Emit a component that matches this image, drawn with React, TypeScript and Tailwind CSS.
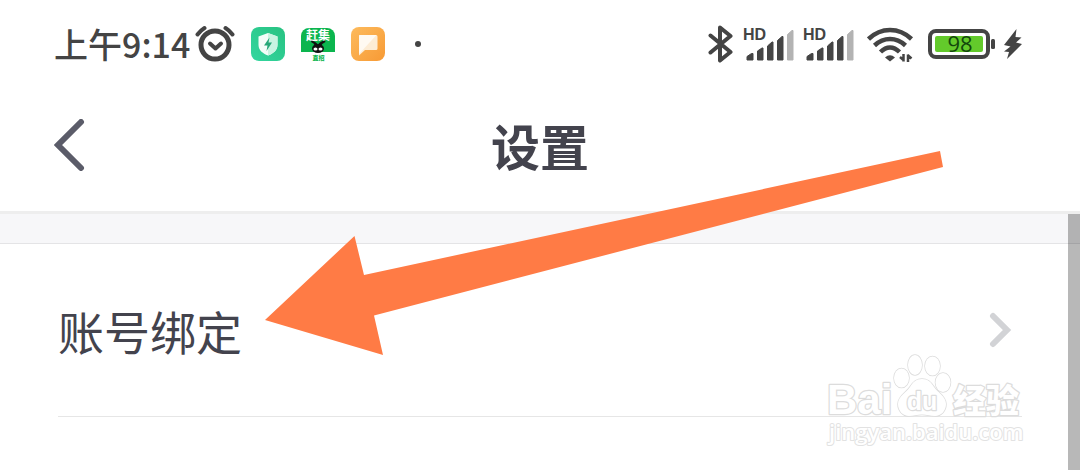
import type { ReactNode } from 'react'

function AlarmIcon() {
  return (
    <svg viewBox="0 0 40 40" className="size-10" fill="none" stroke="#444" strokeLinecap="round" aria-hidden="true">
      <circle cx="20" cy="21" r="14" strokeWidth="5" />
      <path d="M2.500 10.500Q5.500 6.500 9.500 4M30.500 4Q34.500 6.500 37.500 10.500" strokeWidth="4" />
      <path d="M15 19.500l5.500 5 5.500-5" strokeWidth="4" strokeLinejoin="round" />
    </svg>
  )
}

function ShieldAppIcon() {
  return (
    <svg viewBox="0 0 34 34" className="size-[34px]" aria-hidden="true">
      <defs>
        <linearGradient id="shield-bg" x1="0" y1="1" x2="1" y2="0">
          <stop offset="0" stopColor="#34d6a0" />
          <stop offset="1" stopColor="#27c281" />
        </linearGradient>
      </defs>
      <rect width="34" height="34" rx="8" fill="url(#shield-bg)" />
      <path d="M17 6l9.500 3.500V18c0 5-4 8.500-9.500 10.500C11.500 26.500 7.500 23 7.500 18V9.500z" fill="#f3fdf9" />
      <path d="M17 6l9.500 3.500V18c0 5-4 8.500-9.500 10.500z" fill="#c9f4e2" />
      <path d="M18.500 10.500L13 18.500h3.500L15.500 24l5.500-8.500h-3.500z" fill="#25a878" />
    </svg>
  )
}

function JobsAppIcon() {
  return (
    <svg viewBox="0 0 34 34" className="size-[34px] overflow-visible" role="img" aria-label="赶集直招">
      <path d="M0 25V9a8 8 0 0 1 8-8h18a8 8 0 0 1 8 8v16z" fill="#0bb54e" />
      <text x="17" y="13" textAnchor="middle" fontSize="12" fontWeight="700" fill="#fff" fontFamily="'Noto Sans CJK SC', sans-serif">
        赶集
      </text>
      <path d="M11 25.500h12l2 2.500H9z" fill="#fff" />
      <path d="M10.500 13.500q5 1 6.500 4.500 1.500-4 7-4.500l.5 1.500q-3.500 1.500-4.500 4h-6q-1-3-4-4z" fill="#111" />
      <ellipse cx="17" cy="21.500" rx="6" ry="4.500" fill="#111" />
      <ellipse cx="14.500" cy="22" rx="2" ry="1.500" fill="#fff" />
      <ellipse cx="19.500" cy="22" rx="2" ry="1.500" fill="#fff" />
      <text x="17.500" y="33" textAnchor="middle" fontSize="6" fontWeight="900" fill="#0bb54e" fontFamily="'Noto Sans CJK SC', sans-serif">
        直招
      </text>
    </svg>
  )
}

function NoteAppIcon() {
  return (
    <svg viewBox="0 0 34 34" className="size-[34px]" aria-hidden="true">
      <defs>
        <linearGradient id="note-bg" x1="0" y1="0" x2="1" y2="1">
          <stop offset="0" stopColor="#fdbb5d" />
          <stop offset="1" stopColor="#f79a35" />
        </linearGradient>
      </defs>
      <rect width="34" height="34" rx="8" fill="url(#note-bg)" />
      <path d="M9 8h16a1.500 1.500 0 0 1 1.500 1.500v12A1.500 1.500 0 0 1 25 23H14l-6 5.500V9A1 1 0 0 1 9 8z" fill="#fdecd4" />
      <path d="M9 8h16.500L8 27V9A1 1 0 0 1 9 8z" fill="#fffaf2" />
    </svg>
  )
}

function BluetoothIcon() {
  return (
    <svg viewBox="0 0 26 40" className="h-10 w-[26px]" fill="none" stroke="#444" strokeWidth="4" strokeLinecap="round" strokeLinejoin="round" aria-hidden="true">
      <path d="M2.500 11.500L22.500 28 12 36.500V3.500L22.500 12 2.500 28.500" />
    </svg>
  )
}

function SignalIcon() {
  return (
    <svg viewBox="0 0 50 36" className="h-9 w-[50px] overflow-visible" fill="#444" role="img" aria-label="HD">
      <text x="-1" y="14" fontSize="16" fontWeight="700" fontFamily="'Liberation Sans', sans-serif">
        HD
      </text>
      <g strokeLinejoin="round" strokeWidth="1">
        <path d="M3 30.500l4.500-3H9V34H3z" stroke="#444" />
        <path d="M13.500 25l4.500-3h1V34h-5.500z" stroke="#444" />
        <path d="M23.500 20l4.500-4h1V34h-5.500z" stroke="#444" />
        <path d="M33.500 14.500l4.500-4h1V34h-5.500z" stroke="#444" />
        <path d="M43.500 8.500l4.500-4h1V34h-5.500z" fill="#b3b3b3" stroke="#b3b3b3" />
      </g>
    </svg>
  )
}

function WifiIcon() {
  return (
    <svg viewBox="0 0 48 36" className="mx-[3px] h-9 w-12" fill="none" stroke="#444" strokeWidth="4.500" aria-hidden="true">
      <path d="M1.500 13Q11 4 23 4T44.500 13" />
      <path d="M7.500 19.500Q14.500 13 23 13T38.500 19.500" />
      <path d="M13.500 26Q18 21.500 23 21.500T32.500 26" />
      <path d="M18 31.500Q23 27 28 31.500L23 35.500z" fill="#444" stroke="none" />
      <path d="M36.500 28v7.500M37 34.500l-4-3.500M41 36v-7.500M40.500 29l4 3.500" strokeWidth="2.500" />
    </svg>
  )
}

function BatteryIcon() {
  return (
    <svg viewBox="0 0 66 32" className="h-8 w-[66px] overflow-visible" role="img" aria-label="98%">
      <rect x="2" y="3" width="58" height="26" rx="6" fill="#fff" stroke="#444" strokeWidth="4" />
      <rect x="7" y="8" width="48" height="16" rx="2" fill="#63ca2b" />
      <rect x="63" y="11" width="4" height="10" rx="1.500" fill="#444" />
      <text x="32" y="24" textAnchor="middle" fontSize="22" fontWeight="500" fill="#12470c" fontFamily="'Open Sans', sans-serif">
        98
      </text>
    </svg>
  )
}

function BoltIcon() {
  return (
    <svg viewBox="0 0 18 32" className="h-8 w-[18px]" fill="#444" aria-hidden="true">
      <path d="M12.500 1L0 17l6.500 1.500L0 23.500l5 .5L3 31 18 16l-6-1.500L17.500 9.500l-6-.5z" />
    </svg>
  )
}

function StatusBar() {
  return (
    <div className="flex h-22 items-center justify-between px-[54px] pr-[58px]">
      <div className="flex items-center gap-4">
        <div className="flex items-center gap-[5px]">
          <time className="text-[34px] leading-10 font-medium text-[#444]">上午9:14</time>
          <AlarmIcon />
        </div>
        <ShieldAppIcon />
        <JobsAppIcon />
        <NoteAppIcon />
        <span className="ml-3.5 size-1.5 rounded-full bg-[#444]" />
      </div>
      <div className="flex items-center gap-2.5">
        <BluetoothIcon />
        <SignalIcon />
        <SignalIcon />
        <WifiIcon />
        <BatteryIcon />
        <BoltIcon />
      </div>
    </div>
  )
}

function Header({ title }: { title: string }) {
  return (
    <header className="grid h-[126px] grid-cols-[1fr_auto_1fr] items-center border-b-3 border-[#eee] px-[54px] pb-2.5">
      <button type="button" aria-label="返回" className="justify-self-start">
        <svg viewBox="0 0 32 52" className="h-[52px] w-8" fill="none" stroke="#5b5c69" strokeWidth="6" strokeLinecap="round" strokeLinejoin="miter">
          <path d="M27 3L4 26l23 23" />
        </svg>
      </button>
      <h1 className="text-[49px] leading-14 font-bold text-[#43434d]">{title}</h1>
    </header>
  )
}

function SettingRow({ children }: { children: ReactNode }) {
  return (
    <li className="border-b border-[#e6e6e6]">
      <a href="#binding" className="flex h-43 items-center justify-between pr-2.5">
        <span className="text-[46px] leading-14 text-[#43434d]">{children}</span>
        <svg viewBox="0 0 24 36" className="h-9 w-6" fill="none" stroke="#d2d3d6" strokeWidth="6" strokeLinecap="round" aria-hidden="true">
          <path d="M5 4l14 14L5 32" />
        </svg>
      </a>
    </li>
  )
}

// Points from the tail at the top right down to the row label
function PointerArrow() {
  return (
    <svg viewBox="0 0 678 204" className="pointer-events-none absolute left-[265px] top-[151px] w-[678px]" aria-hidden="true">
      <path d="M0 169L89.500 85 99 124 675 0l3 16L109 164.500l9 39.500z" fill="#ff7b45" />
    </svg>
  )
}

function Watermark() {
  return (
    <svg
      viewBox="0 0 200 96"
      className="pointer-events-none absolute right-14 bottom-5 w-[200px]"
      fill="#fff"
      stroke="#dcdcdc"
      strokeWidth="2.500"
      strokeLinejoin="round"
      paintOrder="stroke"
      role="img"
      aria-label="Baidu 经验"
    >
      <text x="3" y="60" fontSize="42" fontWeight="700" fontFamily="'Liberation Sans', sans-serif">
        Bai
      </text>
      <g strokeWidth="1.500">
        <ellipse cx="77.500" cy="24" rx="7.500" ry="9.500" />
        <ellipse cx="91" cy="11" rx="7" ry="10" />
        <ellipse cx="108.500" cy="12" rx="7.500" ry="9.500" />
        <ellipse cx="119" cy="28.500" rx="7.500" ry="9.500" />
        <path d="M98 25c-6 0-9 3-12 8s-12 9-12 17c0 7 5 12 11 12 5 0 8-1.500 13-1.500s8 1.500 13 1.500c6 0 11-5 11-12 0-8-9-12-12-17s-6-8-12-8z" />
      </g>
      <text x="98" y="56" textAnchor="middle" fontSize="25" fontWeight="700" fontFamily="'Liberation Sans', sans-serif">
        du
      </text>
      <text x="129" y="59" fontSize="33" fontWeight="900" fontFamily="'Noto Sans CJK SC', sans-serif">
        经验
      </text>
      <text x="5" y="86" fontSize="22" fontWeight="600" fontFamily="'Open Sans', sans-serif" stroke="#e2e2e2" strokeWidth="2">
        jingyan.baidu.com
      </text>
    </svg>
  )
}

export default function App() {
  return (
    <div className="relative flex min-h-screen flex-col overflow-hidden bg-white font-['Noto_Sans_CJK_SC',sans-serif]">
      <StatusBar />
      <Header title="设置" />
      <main className="relative grow">
        <div className="h-[30px] border-b border-[#e4e4e6] bg-[#f7f7f9]" />
        <ul className="px-[58px]">
          <SettingRow>账号绑定</SettingRow>
        </ul>
        <div className="absolute inset-y-0 right-0 w-3 bg-black/28" />
      </main>
      <PointerArrow />
      <Watermark />
    </div>
  )
}
